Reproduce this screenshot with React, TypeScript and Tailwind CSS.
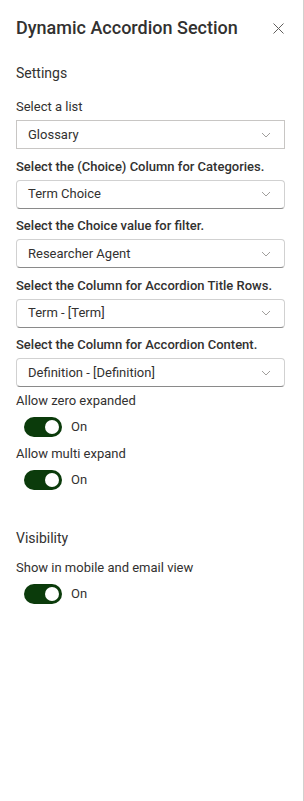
import React, { useState } from "react";

const font = { fontFamily: 'Roboto, "Open Sans", sans-serif' };

function Chevron() {
    return (
        <svg width="10" height="6" viewBox="0 0 10 6" fill="none">
            <path d="M1 1l4 4 4-4" stroke="#a19f9d" strokeWidth="1" />
        </svg>
    );
}

// dropdown field, first one is square (v8 style), others rounded
function Field({ label, value, bold, square }: { label: string; value: string; bold?: boolean; square?: boolean }) {
    return (
        <div className="flex flex-col">
            <div className={`text-[13px] leading-[20px] text-[#323130] pb-[3px] ${bold ? "font-medium" : ""}`}>
                {label}
            </div>
            <div
                className={
                    square
                        ? "flex items-center justify-between h-[29px] pl-[11px] pr-[13px] border border-[#c8c6c4] bg-white"
                        : "flex items-center justify-between h-[29px] pl-[11px] pr-[13px] border border-[#d1d1d1] border-b-[#8a8a8a] rounded-[4px] bg-white"
                }
            >
                <span className="text-[13px] text-[#323130]">{value}</span>
                <Chevron />
            </div>
        </div>
    );
}

function Toggle({ label }: { label: string }) {
    const [on, setOn] = useState(true);
    return (
        <div className="flex flex-col">
            <div className="text-[13px] leading-[20px] text-[#323130]">{label}</div>
            <div className="flex items-center gap-[9px] pl-2 pt-[6px]">
                <button
                    onClick={() => setOn(!on)}
                    className={`w-[38px] h-[20px] rounded-full flex items-center px-[3px] ${on ? "bg-[#0b3b0b] justify-end" : "bg-white border border-[#605e5c] justify-start"}`}
                >
                    <span className={`w-[14px] h-[14px] rounded-full ${on ? "bg-white" : "bg-[#605e5c]"}`}></span>
                </button>
                <span className="text-[13px] text-[#323130]">{on ? "On" : "Off"}</span>
            </div>
        </div>
    );
}

export default function App() {
    return (
        <div style={font} className="w-[304px] h-[801px] bg-white border-r border-[#d2d0ce] box-border">
            <div className="flex items-center justify-between pl-4 pr-[19px] pt-[15px]">
                <h1 className="text-[18px] leading-[26px] font-medium text-[#323130]">Dynamic Accordion Section</h1>
                <svg width="11" height="11" viewBox="0 0 11 11">
                    <path d="M0.5 0.5l10 10M10.5 0.5l-10 10" stroke="#605e5c" strokeWidth="1" />
                </svg>
            </div>

            <div className="px-4 pt-[22px]">
                <div className="text-[14px] leading-[20px] text-[#323130] pb-[14px]">Settings</div>
                <div className="flex flex-col gap-[7.5px] pr-[2px]">
                    <Field label="Select a list" value="Glossary" square />
                    <Field label="Select the (Choice) Column for Categories." value="Term Choice" bold />
                    <Field label="Select the Choice value for filter." value="Researcher Agent" bold />
                    <Field label="Select the Column for Accordion Title Rows." value="Term - [Term]" bold />
                    <Field label="Select the Column for Accordion Content." value="Definition - [Definition]" bold />
                </div>
                <div className="flex flex-col gap-[7px] pt-[4px]">
                    <Toggle label="Allow zero expanded" />
                    <Toggle label="Allow multi expand" />
                </div>

                <div className="text-[14px] leading-[20px] text-[#323130] pt-[38px] pb-[10px]">Visibility</div>
                <Toggle label="Show in mobile and email view" />
            </div>
        </div>
    );
}
